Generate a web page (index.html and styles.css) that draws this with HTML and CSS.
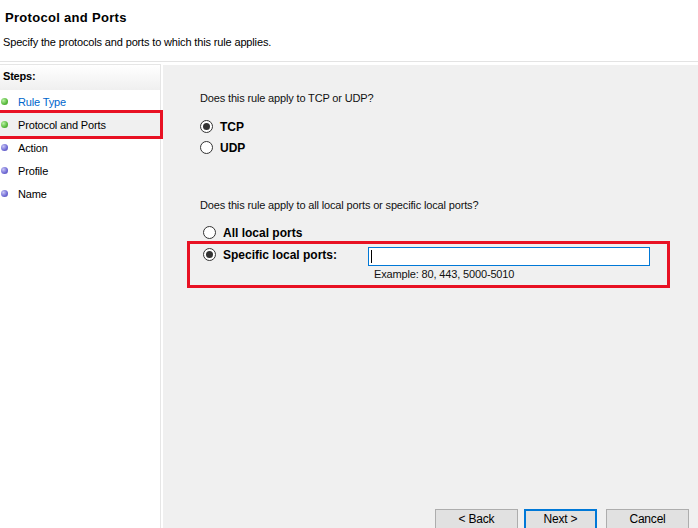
FILE: index.html
```html
<!DOCTYPE html>
<html lang="en">
<head>
    <meta charset="UTF-8">
    <title>Protocol and Ports</title>
    <link rel="stylesheet" href="styles.css">
</head>
<body>
    <div class="wizard">
        <div class="header">
            <h1 class="title">Protocol and Ports</h1>
            <p class="subtitle">Specify the protocols and ports to which this rule applies.</p>
        </div>
        <div class="main">
            <div class="steps">
                <div class="steps-head">Steps:</div>
                <ul class="step-list">
                    <li class="step link"><span class="dot green"></span>Rule Type</li>
                    <li class="step current"><span class="dot green"></span>Protocol and Ports</li>
                    <li class="step"><span class="dot blue"></span>Action</li>
                    <li class="step"><span class="dot blue"></span>Profile</li>
                    <li class="step"><span class="dot blue"></span>Name</li>
                </ul>
            </div>
            <div class="content">
                <div class="form">
                    <p class="question">Does this rule apply to TCP or UDP?</p>
                    <div class="options">
                        <label class="option"><span class="radio checked"></span>TCP</label>
                        <label class="option"><span class="radio"></span>UDP</label>
                    </div>

                    <p class="question second">Does this rule apply to all local ports or specific local ports?</p>
                    <div class="options ports">
                        <label class="option"><span class="radio"></span>All local ports</label>
                    </div>
                    <div class="highlight">
                        <div class="port-row">
                            <label class="option wide"><span class="radio checked"></span>Specific local ports:</label>
                            <div class="port-field">
                                <div class="textbox"><span class="caret"></span></div>
                                <div class="example">Example: 80, 443, 5000-5010</div>
                            </div>
                        </div>
                    </div>
                </div>
                <div class="buttons">
                    <button class="btn">&lt; Back</button>
                    <button class="btn default">Next &gt;</button>
                    <button class="btn cancel">Cancel</button>
                </div>
            </div>
        </div>
    </div>
</body>
</html>
```

FILE: styles.css
```css
body {
    margin: 0;
    font-family: "Liberation Sans", Arial, sans-serif;
    font-size: 11px;
    letter-spacing: -0.15px;
    color: #000;
    background: #fff;
}

.wizard {
    width: 698px;
    height: 528px;
    display: flex;
    flex-direction: column;
    overflow: hidden;
}

.header {
    height: 62px;
    border-bottom: 1px solid #e3e3e3;
    padding-left: 5px;
    box-sizing: border-box;
}

.title {
    margin: 0;
    padding-top: 10px;
    font-size: 13px;
    font-weight: bold;
    letter-spacing: 0.3px;
    line-height: 16px;
}

.subtitle {
    margin: 9px 0 0 -2px;
    line-height: 14px;
}

.main {
    flex: 1;
    display: flex;
    padding-top: 2px;
}

.steps {
    width: 161px;
    border-top: 1px solid #e6e6e6;
    border-right: 1px solid #e6e6e6;
    box-sizing: border-box;
}

.steps-head {
    height: 25px;
    line-height: 23px;
    padding-left: 3px;
    font-weight: bold;
    letter-spacing: -0.2px;
    background: linear-gradient(#ffffff, #efefef);
}

.step-list {
    list-style: none;
    margin: 0;
    padding: 0;
}

.step {
    display: flex;
    align-items: center;
    height: 23px;
    padding-left: 1px;
}

.step.link {
    color: #0066cc;
}

.step.current {
    background: #f0f0f0;
    outline: 3px solid #e81123;
}

.dot {
    width: 7px;
    height: 7px;
    border-radius: 50%;
    margin-right: 10px;
}

.dot.green {
    background: radial-gradient(circle at 35% 35%, #b9f0a3, #56b93b 60%, #3c8f25);
}

.dot.blue {
    background: radial-gradient(circle at 35% 35%, #c9c6f5, #6d68d4 60%, #4b45a8);
}

.content {
    flex: 1;
    margin-left: 2px;
    margin-top: 1px;
    background: #f0f0f0;
    display: flex;
    flex-direction: column;
    justify-content: space-between;
}

.form {
    padding: 26px 0 0 37px;
}

.question {
    margin: 0;
    line-height: 14px;
    color: #111;
}

.question.second {
    margin-top: 40px;
}

.options {
    margin-top: 11px;
}

.options.ports {
    margin-top: 10px;
    margin-left: 3px;
}

.option {
    display: flex;
    align-items: center;
    height: 21px;
    font-size: 12px;
    font-weight: bold;
    letter-spacing: 0;
}

.radio {
    width: 11px;
    height: 11px;
    border: 1px solid #333;
    border-radius: 50%;
    background: #fff;
    margin-right: 7px;
    position: relative;
}

.radio.checked::after {
    content: "";
    position: absolute;
    left: 2px;
    top: 2px;
    width: 7px;
    height: 7px;
    border-radius: 50%;
    background: #333;
}

.highlight {
    width: 483px;
    height: 47px;
    margin: -2px 0 0 -13px;
    border: 3px solid #e81123;
    box-sizing: border-box;
    padding-left: 13px;
}

.port-row {
    display: flex;
}

.option.wide {
    width: 165px;
}

.textbox {
    width: 282px;
    height: 19px;
    margin-top: 3px;
    border: 1px solid #0078d7;
    background: #fff;
    box-sizing: border-box;
    display: flex;
    align-items: center;
    padding-left: 2px;
}

.caret {
    width: 1px;
    height: 13px;
    background: #000;
}

.example {
    margin-top: 1px;
    padding-left: 6px;
    line-height: 14px;
    color: #111;
}

.buttons {
    display: flex;
    justify-content: flex-end;
    gap: 6px;
    padding-right: 9px;
    margin-bottom: -5px;
}

.btn {
    width: 83px;
    height: 24px;
    font-family: inherit;
    font-size: 12px;
    letter-spacing: -0.2px;
    color: #000;
    background: #e1e1e1;
    border: 1px solid #adadad;
    padding: 0 0 4px;
}

.btn.default {
    width: 73px;
    border: 2px solid #0078d7;
}

.btn.cancel {
    margin-left: 3px;
}
```
